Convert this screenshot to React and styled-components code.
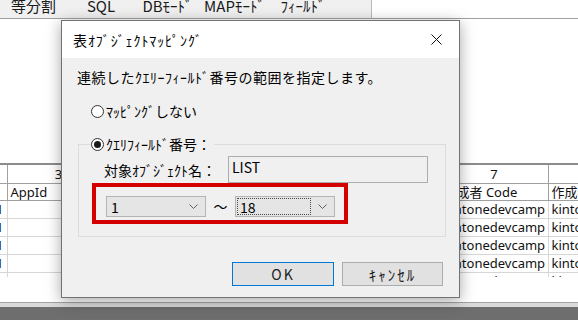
import styled, { createGlobalStyle } from 'styled-components';

const GlobalStyle = createGlobalStyle`
    html, body {
        margin: 0;
        padding: 0;
        background: #fff;
    }
    body {
        font-family: 'Noto Sans CJK JP', 'Noto Sans', sans-serif;
        color: #000;
    }
`;

const Screen = styled.div`
    position: relative;
    width: 578px;
    height: 320px;
    overflow: hidden;
    background: #fff;
    display: flex;
    flex-direction: column;
`;

const Toolbar = styled.div`
    height: 18px;
    flex-shrink: 0;
    border-bottom: 1px solid #a0a0a0;
    display: flex;
`;

const TabStrip = styled.div`
    width: 371px;
    display: flex;
    background: #f0f0f0;
    border-right: 1px solid #b9b9b9;
`;

const Tab = styled.div`
    width: ${(props) => props.w}px;
    text-align: center;
    font-size: 15px;
    line-height: 12px;
    white-space: nowrap;
    color: #1a1a1a;
`;

const GridArea = styled.div`
    margin-top: 144px;
    height: 112px;
    flex-shrink: 0;
    border-top: 2px solid #8c8c8c;
    overflow: hidden;
`;

const Table = styled.table`
    border-collapse: collapse;
    table-layout: fixed;
    width: 658px;
    font-family: 'Noto Sans', 'Noto Sans CJK JP', sans-serif;
    font-size: 13px;
    color: #111;
    td {
        padding: 0 3px;
        white-space: nowrap;
        overflow: hidden;
        border-right: 1px solid #d6d6d6;
        border-bottom: 1px solid #d6d6d6;
        height: 17px;
        line-height: 17px;
    }
    .num td {
        text-align: center;
        height: 18px;
        border-color: #a0a0a0;
    }
    .head td {
        height: 16px;
        line-height: 16px;
        border-color: #a0a0a0;
    }
    td.idx {
        direction: rtl;
        text-align: right;
        padding: 0 3px 0 0;
    }
`;

const BottomBar = styled.div`
    margin-top: auto;
    height: 17px;
    flex-shrink: 0;
    border-top: 1px solid #a2a2a2;
    background: linear-gradient(#dadada 0 4px, #6e6e6e 4px);
`;

const Dialog = styled.div`
    position: absolute;
    left: 61px;
    top: 20px;
    width: 399px;
    height: 278px;
    box-sizing: border-box;
    border: 1px solid #727272;
    background: #f0f0f0;
    box-shadow: 0 3px 14px rgba(0, 0, 0, 0.35);
    display: flex;
    flex-direction: column;
`;

const TitleBar = styled.div`
    height: 37px;
    flex-shrink: 0;
    background: #fff;
    display: flex;
    align-items: center;
    justify-content: space-between;
    padding-left: 11px;
`;

const Title = styled.span`
    font-size: 14px;
    letter-spacing: 0.9px;
    line-height: 16px;
`;

const CloseButton = styled.div`
    width: 45px;
    height: 37px;
    display: flex;
    align-items: center;
    justify-content: center;
`;

const Body = styled.div`
    flex: 1;
    display: flex;
    flex-direction: column;
    padding: 0 15px 11px 15px;
    font-size: 14px;
`;

const Instruction = styled.div`
    margin-top: 11px;
    line-height: 16px;
    letter-spacing: 0.5px;
`;

const RadioRow = styled.label`
    display: flex;
    align-items: center;
    gap: 2px;
    height: 16px;
    line-height: 16px;
    margin-left: ${(props) => props.indent || 0}px;
    margin-top: ${(props) => props.top || 0}px;
`;

const RadioCircle = styled.span`
    width: 13px;
    height: 13px;
    box-sizing: border-box;
    border-radius: 50%;
    border: 1px solid #333;
    background: #fff;
    display: flex;
    align-items: center;
    justify-content: center;
    &::after {
        content: '';
        width: 7px;
        height: 7px;
        border-radius: 50%;
        background: ${(props) => (props.checked ? '#1a1a1a' : 'transparent')};
    }
`;

const Group = styled.fieldset`
    margin: 17px 0 0 1px;
    width: 368px;
    box-sizing: border-box;
    padding: 0 12px 12px 12px;
    border: 1px solid #dcdcdc;
    min-inline-size: 0;
    legend {
        padding: 0 3px 0 0;
    }
`;

const FieldRow = styled.div`
    display: flex;
    align-items: center;
    margin: 4px 0 0 13px;
`;

const FieldLabel = styled.span`
    width: 124px;
    line-height: 16px;
`;

const TextBox = styled.div`
    width: 200px;
    height: 27px;
    box-sizing: border-box;
    border: 1px solid #adadad;
    background: #f0f0f0;
    padding: 2px 0 0 3px;
    line-height: 16px;
`;

const Highlight = styled.div`
    margin-left: 1px;
    width: 256px;
    height: 41px;
    box-sizing: border-box;
    border: 4px solid #d40000;
    padding: 9px 0 0 10px;
    display: flex;
    align-items: flex-start;
`;

const Combo = styled.div`
    width: 100px;
    height: 21px;
    box-sizing: border-box;
    border: 1px solid #b4b4b4;
    background: #e5e5e5;
    display: flex;
    align-items: center;
    justify-content: space-between;
    padding: 0 7px 0 1px;
`;

const ComboValue = styled.span`
    width: 74px;
    height: 17px;
    box-sizing: border-box;
    padding-left: 2px;
    line-height: 16px;
    border: 1px dotted ${(props) => (props.focused ? '#4a4a4a' : 'transparent')};
`;

const Tilde = styled.span`
    width: 29px;
    text-align: center;
    line-height: 21px;
`;

const ButtonRow = styled.div`
    margin-top: auto;
    display: flex;
    justify-content: flex-end;
    gap: 8px;
    padding-right: 1px;
`;

const Button = styled.div`
    width: ${(props) => props.w}px;
    height: 24px;
    box-sizing: border-box;
    border: 1px solid ${(props) => (props.primary ? '#0078d7' : '#adadad')};
    background: #e1e1e1;
    display: flex;
    align-items: center;
    justify-content: center;
    font-size: ${(props) => (props.primary ? '14px' : '15px')};
    letter-spacing: 2px;
    color: #222;
`;

const Chevron = () => (
  <svg width="9" height="5" viewBox="0 0 9 5">
    <path d="M0.5 0.5 L4.5 4.5 L8.5 0.5" fill="none" stroke="#606060" strokeWidth="1" />
  </svg>
);

const tabs = [
  ['等分割', 67],
  ['SQL', 68],
  ['DBﾓｰﾄﾞ', 65],
  ['MAPﾓｰﾄﾞ', 69],
  ['ﾌｨｰﾙﾄﾞ', 68],
];

const cols = [7, 103, 110, 110, 110, 108, 110];
const rows = [
  ['1', '', '12', '', '', 'kintonedevcamp', 'kintonedevcamp'],
  ['1', '', '13', '', '', 'kintonedevcamp', 'kintonedevcamp'],
  ['1', '', '14', '', '', 'kintonedevcamp', 'kintonedevcamp'],
  ['1', '', '15', '', '', 'kintonedevcamp', 'kintonedevcamp'],
  ['1', '', '16', '', '', 'kintonedevcamp', 'kintonedevcamp'],
];

const App = () => {
  return (
    <Screen>
      <GlobalStyle />
      <Toolbar>
        <TabStrip>
          { tabs.map(([label, w]) => (
            <Tab w={ w } key={ label }>{label}</Tab>
          )) }
        </TabStrip>
      </Toolbar>

      <GridArea>
        <Table>
          <colgroup>
            { cols.map((w, i) => <col key={ i } style={ { width: w } } />) }
          </colgroup>
          <tbody>
            <tr className="num">
              <td></td><td>3</td><td>4</td><td>5</td><td>6</td><td>7</td><td>8</td>
            </tr>
            <tr className="head">
              <td></td><td>AppId</td><td>RecordId</td><td>Revision</td><td>作成日時</td>
              <td>作成者 Code</td><td>作成者 Name</td>
            </tr>
            { rows.map((r, i) => (
              <tr key={ i }>
                { r.map((v, j) => <td className={ j === 0 ? 'idx' : '' } key={ j }>{v}</td>) }
              </tr>
            )) }
          </tbody>
        </Table>
      </GridArea>

      <BottomBar />

      <Dialog>
        <TitleBar>
          <Title>表ｵﾌﾞｼﾞｪｸﾄﾏｯﾋﾟﾝｸﾞ</Title>
          <CloseButton>
            <svg width="11" height="11" viewBox="0 0 11 11">
              <path d="M0.5 0.5 L10.5 10.5 M10.5 0.5 L0.5 10.5" stroke="#111" strokeWidth="1" />
            </svg>
          </CloseButton>
        </TitleBar>
        <Body>
          <Instruction>連続したｸｴﾘｰﾌｨｰﾙﾄﾞ番号の範囲を指定します。</Instruction>
          <RadioRow indent={ 14 } top={ 18 }>
            <RadioCircle />
            <span>ﾏｯﾋﾟﾝｸﾞしない</span>
          </RadioRow>
          <Group>
            <legend>
              <RadioRow>
                <RadioCircle checked />
                <span>ｸｴﾘﾌｨｰﾙﾄﾞ番号：</span>
              </RadioRow>
            </legend>
            <FieldRow>
              <FieldLabel>対象ｵﾌﾞｼﾞｪｸﾄ名：</FieldLabel>
              <TextBox>LIST</TextBox>
            </FieldRow>
            <Highlight>
              <Combo>
                <ComboValue>1</ComboValue>
                <Chevron />
              </Combo>
              <Tilde>～</Tilde>
              <Combo>
                <ComboValue focused>18</ComboValue>
                <Chevron />
              </Combo>
            </Highlight>
          </Group>
          <ButtonRow>
            <Button w={ 102 } primary>OK</Button>
            <Button w={ 101 }>ｷｬﾝｾﾙ</Button>
          </ButtonRow>
        </Body>
      </Dialog>
    </Screen>
  );
};

export default App;
